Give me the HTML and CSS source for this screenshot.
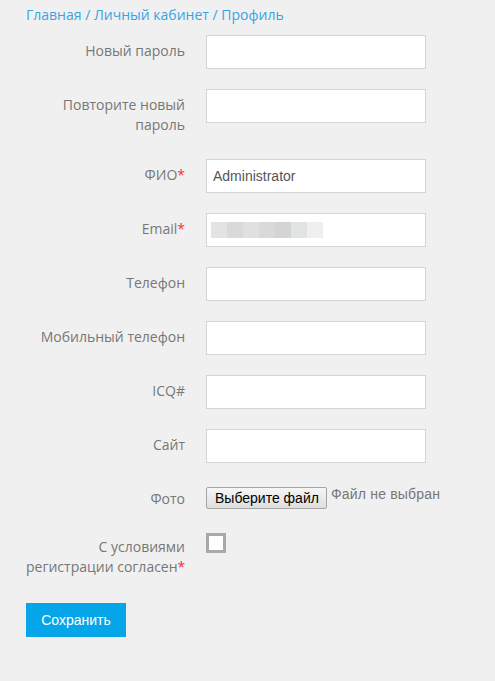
FILE: index.html
```html
<!DOCTYPE html>
<html lang="ru">
<head>
<meta charset="utf-8">
<link rel="stylesheet" href="styles.css">
</head>
<body>
<div class="page">
  <nav class="crumbs"><a href="#">Главная</a> / <a href="#">Личный кабинет</a> / <a href="#">Профиль</a></nav>
  <form class="form">
    <div class="row"><label class="lbl">Новый пароль</label><div class="ctl"><input class="inp" type="password"></div></div>
    <div class="row"><label class="lbl">Повторите новый<br>пароль</label><div class="ctl"><input class="inp" type="password"></div></div>
    <div class="row"><label class="lbl">ФИО<span class="req">*</span></label><div class="ctl"><input class="inp" type="text" value="Administrator"></div></div>
    <div class="row"><label class="lbl">Email<span class="req">*</span></label><div class="ctl"><div class="inp blur"><span class="px p1"></span><span class="px p2"></span><span class="px p3"></span><span class="px p2"></span><span class="px p4"></span><span class="px p5"></span><span class="px p6"></span></div></div></div>
    <div class="row"><label class="lbl">Телефон</label><div class="ctl"><input class="inp" type="text"></div></div>
    <div class="row"><label class="lbl">Мобильный телефон</label><div class="ctl"><input class="inp" type="text"></div></div>
    <div class="row"><label class="lbl">ICQ#</label><div class="ctl"><input class="inp" type="text"></div></div>
    <div class="row"><label class="lbl">Сайт</label><div class="ctl"><input class="inp" type="text"></div></div>
    <div class="row row-file"><label class="lbl">Фото</label><div class="ctl file"><span class="file-btn">Выберите файл</span><span class="file-txt">Файл не выбран</span></div></div>
    <div class="row"><label class="lbl">С условиями<br>регистрации согласен<span class="req">*</span></label><div class="ctl"><span class="chk"></span></div></div>
    <div class="actions"><button class="save" type="button">Сохранить</button></div>
  </form>
</div>
</body>
</html>
```
FILE: styles.css
```css
html, body { margin: 0; padding: 0; background: #f0f0f0; }
body { font-family: "Open Sans", "Liberation Sans", sans-serif; font-size: 14px; color: #777; }
.page { padding: 5px 26px 30px; }
.crumbs { line-height: 20px; color: #3aa3e3; }
.crumbs a { color: #3aa3e3; text-decoration: none; }
.form { margin-top: 10px; }
.row { display: grid; grid-template-columns: 159px 220px; column-gap: 21px; margin-bottom: 20px; align-items: start; }
.lbl { text-align: right; line-height: 20px; padding: 6px 0 4px; color: #777; white-space: nowrap; }
.req { color: #f5313a; }
.inp { box-sizing: border-box; width: 220px; height: 34px; border: 1px solid #d4d4d4; background: #fff; padding: 0 6px; font-family: "Liberation Sans", Arial, sans-serif; font-size: 14px; color: #555; outline: none; margin: 0; display: block; }
.blur { display: flex; align-items: center; padding-left: 4px; }
.px { width: 16px; height: 16px; display: block; }
.p1 { background: #e3e3e3; }
.p2 { background: #d9d9d9; }
.p3 { background: #e0e0e0; }
.p4 { background: #d4d4d4; }
.p5 { background: #e0e4e4; }
.p6 { background: #efefef; }
.row-file { margin-bottom: 18px; }
.file { display: flex; align-items: flex-start; padding-top: 4px; height: 26px; }
.file-btn { box-sizing: border-box; height: 22px; line-height: 20px; padding: 0 7px 0 8px; border: 1px solid #a6a6a6; border-radius: 2px; background: linear-gradient(#f6f6f6, #dedede); color: #000; font-family: "Liberation Sans", Arial, sans-serif; font-size: 14px; white-space: nowrap; }
.file-txt { margin-left: 4px; margin-top: -3px; font-family: "Liberation Sans", Arial, sans-serif; font-size: 14px; color: #777; white-space: nowrap; line-height: 20px; letter-spacing: 0.2px; }
.chk { display: block; box-sizing: border-box; width: 20px; height: 20px; margin-top: 2px; border: 3px solid #a9a9a9; background: #fff; }
.actions { padding-top: 2px; }
.save { border: 0; margin: 0; background: #05a6e9; color: #fff; height: 34px; width: 100px; font-family: "Liberation Sans", Arial, sans-serif; font-size: 14px; cursor: pointer; }
```
